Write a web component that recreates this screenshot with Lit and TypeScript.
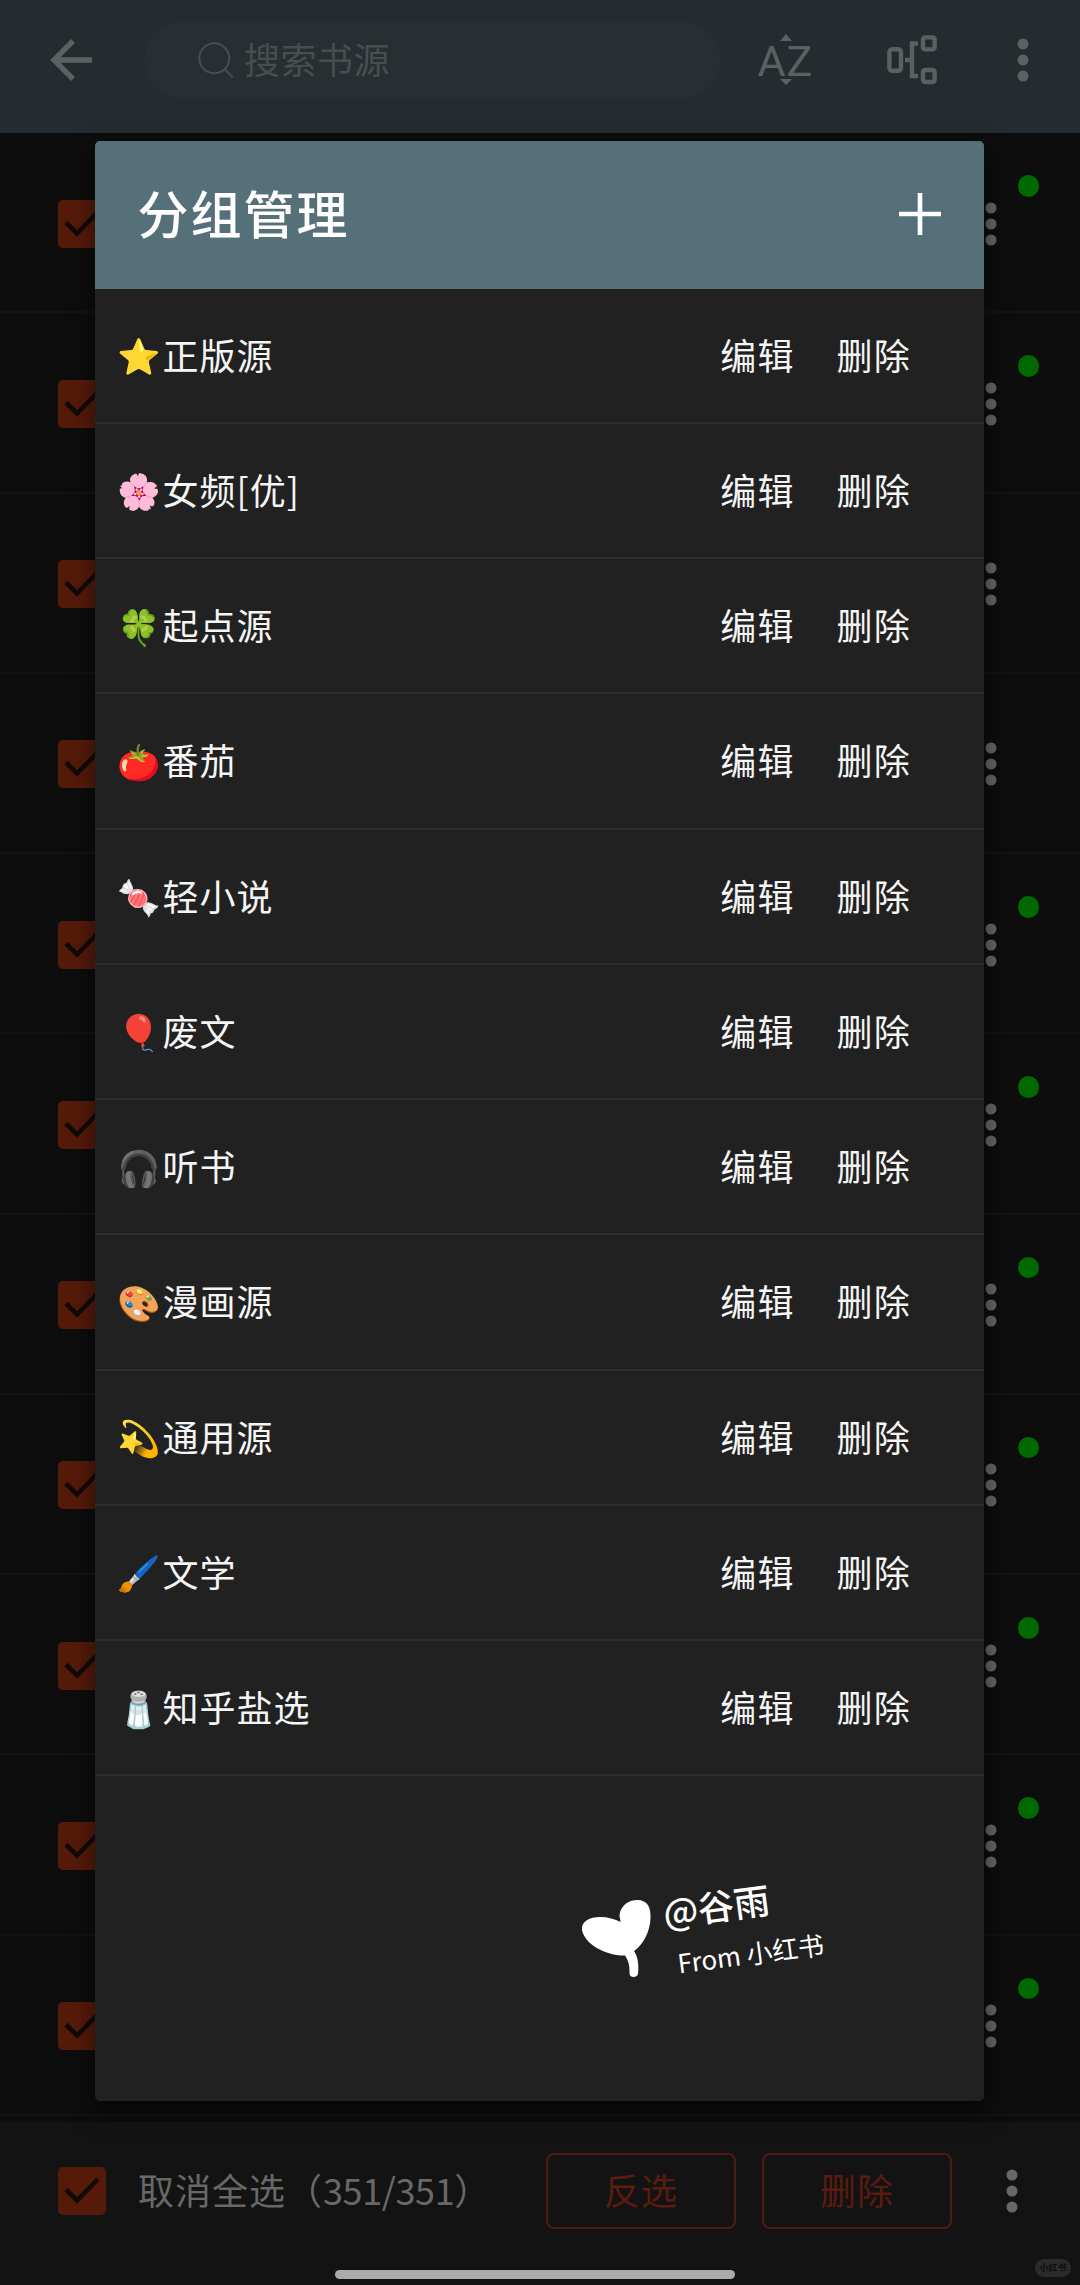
import { LitElement, html, css, svg, nothing } from 'lit';
import { customElement, property } from 'lit/decorators.js';

interface Group {
  icon: string;
  name: string;
}

const groups: Group[] = [
  { icon: '⭐', name: '正版源' },
  { icon: '🌸', name: '女频[优]' },
  { icon: '🍀', name: '起点源' },
  { icon: '🍅', name: '番茄' },
  { icon: '🍬', name: '轻小说' },
  { icon: '🎈', name: '废文' },
  { icon: '🎧', name: '听书' },
  { icon: '🎨', name: '漫画源' },
  { icon: '💫', name: '通用源' },
  { icon: '🖌️', name: '文学' },
  { icon: '🧂', name: '知乎盐选' },
];

// true = the source has an explore page and shows a green dot
const sources = [true, true, false, false, true, true, true, true, true, true, true];

@customElement('more-dots')
class MoreDots extends LitElement {
  static styles = css`
    :host {
      display: block;
      width: 12px;
      height: 44px;
    }
    svg {
      display: block;
    }
  `;

  render() {
    return html`
      <svg width="12" height="44" viewBox="0 0 12 44" fill="currentColor">
        ${[6, 22, 38].map((y) => svg`<circle cx="6" cy=${y} r="5.5" />`)}
      </svg>
    `;
  }
}

@customElement('check-box')
class CheckBox extends LitElement {
  static styles = css`
    :host {
      display: block;
      width: 48px;
      height: 48px;
      border-radius: 5px;
      background: #561a09;
    }
    svg {
      display: block;
    }
  `;

  render() {
    return html`
      <svg width="48" height="48" viewBox="0 0 48 48" fill="none" stroke="#120a07" stroke-width="4.6">
        <path d="M8 22.5 L19 33.5 L40 12" />
      </svg>
    `;
  }
}

@customElement('source-row')
class SourceRow extends LitElement {
  @property({ type: Boolean }) explore = false;

  static styles = css`
    :host {
      display: flex;
      align-items: center;
      justify-content: space-between;
      box-sizing: border-box;
      height: 180.25px;
      padding: 3px 83px 0 58px;
      border-bottom: 2px solid #121313;
      position: relative;
    }
    more-dots {
      color: #666;
    }
    .dot {
      position: absolute;
      top: 42px;
      right: 41px;
      width: 21.5px;
      height: 21.5px;
      border-radius: 50%;
      background: #006900;
    }
  `;

  render() {
    return html`
      <check-box></check-box>
      <more-dots></more-dots>
      ${this.explore ? html`<span class="dot"></span>` : nothing}
    `;
  }
}

@customElement('group-dialog')
class GroupDialog extends LitElement {
  static styles = css`
    :host {
      display: flex;
      flex-direction: column;
      border-radius: 5px;
      overflow: hidden;
      background: #212121;
      color: #f5f5f5;
      box-shadow: 0 10px 26px rgba(0, 0, 0, 0.55);
    }
    .title {
      display: flex;
      align-items: center;
      justify-content: space-between;
      box-sizing: border-box;
      flex: none;
      height: 147.5px;
      padding: 0 43px 2px 43px;
      background: #56707a;
      color: #fff;
      font-size: 51px;
      font-weight: 500;
      letter-spacing: 2px;
    }
    .title span {
      padding-bottom: 2px;
    }
    .row {
      display: flex;
      align-items: center;
      box-sizing: border-box;
      height: 135.25px;
      padding: 0 73px 3px 22px;
      border-bottom: 2px solid #2c2d2d;
      font-size: 36px;
      letter-spacing: 1.2px;
    }
    .icon {
      width: 42px;
      font-size: 35px;
      letter-spacing: 0;
    }
    .name {
      flex: 1;
      margin-left: 4px;
      letter-spacing: 1px;
    }
    .action + .action {
      margin-left: 42px;
    }
  `;

  render() {
    return html`
      <div class="title">
        <span>分组管理</span>
        <svg width="42" height="42" viewBox="0 0 42 42" stroke="#fff" stroke-width="4.6">
          <path d="M21 0V42M0 21H42" />
        </svg>
      </div>
      ${groups.map(
        (g) => html`
          <div class="row">
            <span class="icon">${g.icon}</span>
            <span class="name">${g.name}</span>
            <span class="action">编辑</span>
            <span class="action">删除</span>
          </div>
        `
      )}
    `;
  }
}

@customElement('app-root')
class AppRoot extends LitElement {
  static styles = css`
    :host {
      display: flex;
      flex-direction: column;
      position: relative;
      width: 1080px;
      height: 2285px;
      overflow: hidden;
      background: #0d0d0d;
      font-family: 'Noto Sans CJK SC', sans-serif;
      font-size: 36px;
      line-height: 1;
    }
    svg {
      display: block;
      flex: none;
    }
    header {
      display: flex;
      align-items: center;
      box-sizing: border-box;
      flex: none;
      height: 133px;
      padding: 0 51px 14px 50px;
      background: #242c2f;
      color: #5b6163;
    }
    .search {
      display: flex;
      align-items: center;
      box-sizing: border-box;
      width: 577px;
      height: 78px;
      margin: 0 37px 0 52px;
      padding-left: 54px;
      border-radius: 39px;
      background: #272f32;
      color: #474e50;
      letter-spacing: 0.5px;
    }
    .search span {
      margin-left: 10px;
      padding-bottom: 3px;
    }
    .tree {
      margin: 0 80px 0 75px;
    }
    header more-dots {
      color: #5b6163;
    }
    main {
      flex: none;
      height: 1989px;
    }
    footer {
      display: flex;
      align-items: center;
      box-sizing: border-box;
      flex: 1;
      padding: 0 62px 26px 58px;
      background: #131313;
      color: #686868;
    }
    .count {
      flex: 1;
      margin-left: 32px;
      padding-bottom: 3px;
      letter-spacing: 1px;
      white-space: nowrap;
    }
    .digits {
      letter-spacing: -0.4px;
    }
    .button {
      display: flex;
      align-items: center;
      justify-content: center;
      box-sizing: border-box;
      width: 190px;
      height: 76px;
      margin-right: 26px;
      padding-bottom: 3px;
      border: 2px solid #4d1c11;
      border-radius: 8px;
      color: #5a1c0f;
      letter-spacing: 1px;
    }
    .button.last {
      margin-right: 54px;
    }
    group-dialog {
      position: absolute;
      left: 94.5px;
      top: 141px;
      width: 889.5px;
      height: 1960px;
    }
    .home {
      position: absolute;
      left: 335px;
      bottom: 6px;
      width: 400px;
      height: 9px;
      border-radius: 5px;
      background: #ababab;
    }
    .badge {
      position: absolute;
      right: 9px;
      bottom: 8px;
      width: 36px;
      height: 18px;
      border-radius: 9px;
      background: #2b2b2b;
      color: #0e0e0e;
      font-size: 9px;
      font-weight: 700;
      line-height: 18px;
      text-align: center;
    }
    .mark {
      position: absolute;
      left: 575px;
      top: 1840px;
      color: #fff;
    }
  `;

  render() {
    return html`
      <header>
        <svg width="42" height="42" viewBox="0 0 42 42" fill="none" stroke="currentColor" stroke-width="5.4">
          <path d="M42 21H4M23 2L4 21L23 40" />
        </svg>
        <div class="search">
          <svg width="36" height="36" viewBox="0 0 36 36" fill="none" stroke="currentColor" stroke-width="2">
            <circle cx="16.3" cy="16.3" r="15" />
            <path d="M26.5 27L35 35.5" />
          </svg>
          <span>搜索书源</span>
        </div>
        <svg width="54" height="52" viewBox="0 0 54 52" fill="currentColor">
          <path d="M22 7H34L28 0ZM22 45H34L28 51Z" />
          <text x="-0.5" y="41.5" font-family="Roboto" font-size="43">A</text>
          <text x="28.5" y="41.5" font-family="Roboto" font-size="43">Z</text>
        </svg>
        <svg class="tree" width="50" height="50" viewBox="0 0 50 50" fill="none" stroke="currentColor" stroke-width="4.4">
          <rect x="2.4" y="14.2" width="11.6" height="21.6" rx="3" />
          <rect x="36" y="2.4" width="11.6" height="12" rx="2" />
          <rect x="36" y="35" width="11.6" height="12" rx="2" />
          <path d="M18 25H25M31 8.5H25V41H31" />
        </svg>
        <more-dots></more-dots>
      </header>
      <main>${sources.map((s) => html`<source-row ?explore=${s}></source-row>`)}</main>
      <footer>
        <check-box></check-box>
        <span class="count">取消全选（<span class="digits">351/351</span>）</span>
        <div class="button">反选</div>
        <div class="button last">删除</div>
        <more-dots></more-dots>
      </footer>
      <group-dialog></group-dialog>
      <svg class="mark" width="260" height="160" viewBox="575 1840 260 160" fill="currentColor">
        <path
          d="M620 1918 C618 1911 625 1900 637 1900 C648 1900 651 1908 650.5 1918 C650 1932 643 1945 634 1951 C638 1957 639 1965 638 1974 C637 1978 630 1978 629.5 1974 C630 1965 628 1960 625 1955.5 C607 1956 585 1945 582 1930 C581 1921 590 1917 600 1917 C608 1917 615 1919 620.5 1922 Z"
        />
        <text x="665" y="1927" font-size="36" font-weight="500" transform="rotate(-7.5 665 1927)">@谷雨</text>
        <text x="679" y="1973.5" font-size="26" transform="rotate(-7.5 679 1973.5)">From 小红书</text>
      </svg>
      <div class="home"></div>
      <div class="badge">小红书</div>
    `;
  }
}
